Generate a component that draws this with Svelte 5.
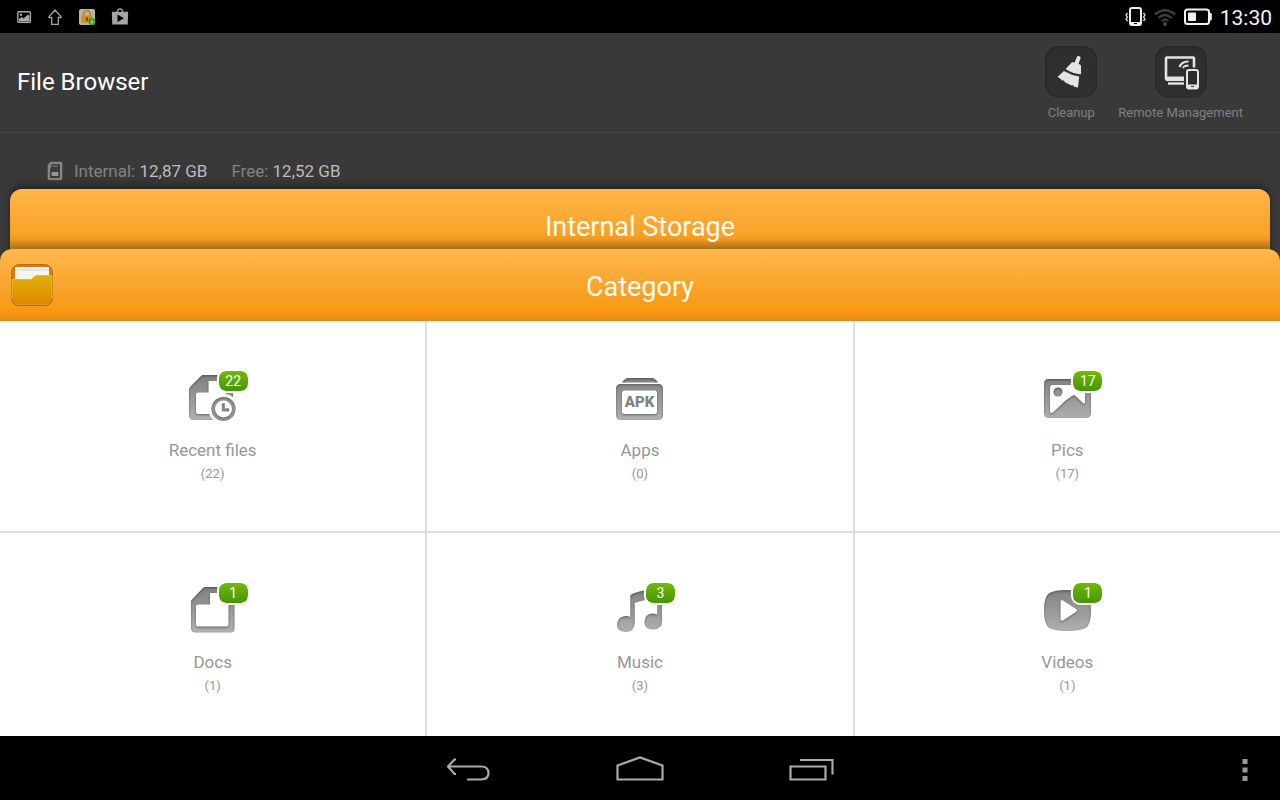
<script>
  const categories = [
    { name: 'Recent files', icon: 'recent', count: 22 },
    { name: 'Apps', icon: 'apps', count: 0 },
    { name: 'Pics', icon: 'pics', count: 17 },
    { name: 'Docs', icon: 'docs', count: 1 },
    { name: 'Music', icon: 'music', count: 3 },
    { name: 'Videos', icon: 'videos', count: 1 }
  ];
</script>

<div class="screen">
  <div class="status">
    <div class="notices">
      <svg width="16" height="16" viewBox="0 0 16 16"><rect x="1.8" y="2.8" width="12.6" height="10.6" rx="1" fill="none" stroke="#a8a8a8" stroke-width="1.4" /><path d="M3 12V10l3-2 1.500 1.500L12 5.500 13.500 7v5.500H3z" fill="#a8a8a8" /><circle cx="5" cy="5.700" r="1.200" fill="#a8a8a8" /></svg>
      <svg width="16" height="18" viewBox="0 0 16 18"><path d="M8 2L2 8.500V9.500H4.700V16.300H11.300V9.500H14V8.500z" fill="none" stroke="#a0a0a0" stroke-width="1.300" /></svg>
      <svg width="18" height="18" viewBox="0 0 18 18"><rect x="1" y="1" width="16" height="16" rx="2" fill="#b9b5a8" /><path d="M5.500 9V6a3.300 3.300 0 0 1 6.600 0v3" fill="none" stroke="#c98420" stroke-width="1.800" /><rect x="3.500" y="7.500" width="10.500" height="7.500" rx="1" fill="#d58a1c" /><path d="M8 9.500h2v3.500h-2z" fill="#7c4a10" /><circle cx="14" cy="13.500" r="3.500" fill="#2c9a20" /><path d="M14 11.300v4m-1.700-1.700L14 15.400l1.700-1.800" fill="none" stroke="#b9e0a8" /></svg>
      <svg width="18" height="20" viewBox="0 0 18 20"><path d="M6.300 5C6.300 1 11.700 1 11.700 5" fill="none" stroke="#a0a0a0" stroke-width="1.300" /><path d="M.8 4.800H17.200L16.700 17.500H1.300z" fill="#a5a5a5" /><path d="M6.500 7.500v7.500l6.500-3.800z" fill="#000" /></svg>
    </div>
    <div class="system">
      <svg width="22" height="20" viewBox="0 0 22 20"><rect x="6" y="1" width="11" height="17" rx="2" fill="none" stroke="#eee" stroke-width="2" /><path d="M6 15h11v3H6z" fill="#eee" /><path d="M10 16.500h3" stroke="#000" /><path d="M3.500 6L2 8l1.500 2L2 12l1.500 2M19.500 6L21 8l-1.500 2 1.500 2-1.500 2" fill="none" stroke="#ddd" stroke-width="1.300" /></svg>
      <svg width="22" height="20" viewBox="0 0 22 20"><g fill="none" stroke="#3c3c3c" stroke-width="2.300"><path d="M1 7.500Q11-1 21 7.500M4.300 11Q11 5 17.700 11M7.500 14Q11 11 14.500 14" /></g><circle cx="11" cy="17" r="2" fill="#484848" /></svg>
      <svg width="28" height="20" viewBox="0 0 28 20"><rect x="1" y="2.500" width="24" height="14.500" rx="2.500" fill="none" stroke="#f1f1f1" stroke-width="2" /><path d="M25 6h1.500q1.300 0 1.300 1.300v5q0 1.200-1.300 1.200H25z" fill="#f1f1f1" /><rect x="4" y="5.500" width="8" height="8.500" rx="1" fill="#f1f1f1" /></svg>
      <span class="clock">13:30</span>
    </div>
  </div>

  <header>
    <h1>File Browser</h1>
    <div class="tools">
      <button class="tool">
        <span class="plate">
          <svg width="52" height="52" viewBox="0 0 52 52" fill="#e4e4e4"><path d="M31.600 11.400Q32.500 9.600 34.400 10.300 36 11 35.500 12.700L33.500 17.500 36 19.500V28.200Q27.500 27.700 20.500 23L27 16.300 29.700 16.500z" /><path d="M18.900 25Q26.500 29.500 34.200 30.400L33 41.600 28.500 40.500 28.300 39 26.500 39.600 20 36.200 18.500 34 18 35 15 32.500 12.500 31z" /></svg>
        </span>
        <span>Cleanup</span>
      </button>
      <button class="tool">
        <span class="plate">
          <svg width="52" height="52" viewBox="0 0 52 52"><rect x="11" y="11.500" width="28" height="22" rx="1" fill="none" stroke="#e4e4e4" stroke-width="2.600" /><path d="M11 30.500H29V35H11z" fill="#e4e4e4" /><path d="M13 37.500H30" stroke="#e4e4e4" stroke-width="2.400" /><path d="M24.500 21Q26.500 15.500 33.500 15.500M28 22Q29.500 19.500 33.500 19.500" fill="none" stroke="#e4e4e4" stroke-width="2.200" /><rect x="29" y="21.500" width="16" height="24" fill="#2d2d2d" /><rect x="32" y="24" width="11" height="18.500" rx="2" fill="none" stroke="#e4e4e4" stroke-width="2" /><path d="M32 38.500h11v4H32z" fill="#e4e4e4" /><path d="M36 40.500h3" stroke="#333" /></svg>
        </span>
        <span>Remote Management</span>
      </button>
    </div>
  </header>

  <div class="capacity">
    <svg width="16" height="20" viewBox="0 0 16 20"><path d="M3.500.800H13.500Q15.300.800 15.300 2.600V17.300Q15.300 19.200 13.500 19.200H2.500Q.700 19.200.700 17.300V4z" fill="#858585" /><path d="M5 3H12Q13 3 13 4V16Q13 17 12 17H4Q3 17 3 16V8L4 7V4z" fill="#3b3b3b" /><path d="M6 4v2M8 4v2M10 4v2" stroke="#858585" /><rect x="4.500" y="11" width="7" height="4" rx="1" fill="#959595" /></svg>
    <span class="pair">Internal: <b>12,87 GB</b></span>
    <span class="pair">Free: <b>12,52 GB</b></span>
  </div>

  <button class="panel storage">Internal Storage</button>
  <div class="panel category">
    <svg class="folder" width="44" height="44" viewBox="0 0 44 44">
      <defs>
        <linearGradient id="fold" x2="0" y2="1"><stop stop-color="#e0b00a" /><stop offset="1" stop-color="#df8802" /></linearGradient>
      </defs>
      <rect x="1.500" y="1.500" width="41" height="41" rx="8" fill="#d97914" stroke="#bd6d0b" />
      <path d="M5 5Q5 4 6 4H38Q39 4 39 5V18H5z" fill="#f4f4f0" />
      <path d="M5 7H39" stroke="#d7d7d0" />
      <path d="M2 16.500H20Q22 16.500 23.500 14.500T27 12.500H42V35Q42 42 35 42H9Q2 42 2 35z" fill="url(#fold)" stroke="#e9b42c" />
      <path d="M2 36Q3 42.500 9 42.500H35Q41 42.500 42 36" fill="none" stroke="#ad6500" />
    </svg>
    <h2>Category</h2>
  </div>

  <main>
    {#each categories as c}
      <button class="tile">
        <span class="art">
          <svg width="72" height="56" viewBox="0 0 72 56">
            <defs>
              <linearGradient id="grey-{c.icon}" gradientUnits="userSpaceOnUse" x1="0" y1="7" x2="0" y2="52"><stop stop-color="#7f7f7f" /><stop offset=".5" stop-color="#989898" /><stop offset="1" stop-color="#b0b0b0" /></linearGradient>
              <filter id="inset-{c.icon}" filterUnits="userSpaceOnUse" x="0" y="0" width="72" height="56" color-interpolation-filters="sRGB">
                <feFlood flood-color="#000" flood-opacity=".4" />
                <feComposite in2="SourceAlpha" operator="out" />
                <feGaussianBlur stdDeviation="1.2" />
                <feOffset dy="1" />
                <feComposite in2="SourceAlpha" operator="in" result="shade" />
                <feMerge><feMergeNode in="SourceGraphic" /><feMergeNode in="shade" /></feMerge>
              </filter>
            </defs>
            <g fill="url(#grey-{c.icon})" fill-rule="evenodd" filter="url(#inset-{c.icon})">
              {#if c.icon === 'recent'}
                <path d="M26 7H52Q56 7 56 11V48Q56 52 52 52H17Q12 52 12 47V22Q12 20 13.500 18.500L23 9Q24.500 7 26 7zM31.500 13V24.500H21Q19 24.500 19 26.500V44Q19 46 21 46H49V13z" />
              {:else if c.icon === 'docs'}
                <path d="M28 7H53Q57.500 7 57.500 11.500V48Q57.500 52.500 53 52.500H18.500Q14 52.500 14 48V22Q14 20.500 15.500 19L25 9Q26.500 7 28 7zM33 13V24.500H21Q19 24.500 19 26.500V44.500Q19 46.500 21 46.500H49.500Q51.500 46.500 51.500 44.500V13z" />
              {:else if c.icon === 'apps'}
                <path d="M18 14.500Q21 10 24 10H48Q51 10 54 14.500z" />
                <path d="M17 16H54Q59 16 59 21V47Q59 52 54 52H17Q12 52 12 47V21Q12 16 17 16zM20.500 22.500Q18 22.500 18 25V43.500Q18 46 20.500 46H50.500Q53 46 53 43.500V25Q53 22.500 50.500 22.500z" />
              {:else if c.icon === 'pics'}
                <path d="M18 11H55Q60 11 60 16V45Q60 50 55 50H18Q13 50 13 45V16Q13 11 18 11zM21.500 17Q19 17 19 19.500V43Q19 45 20.500 45 21.500 45 23 43.500L31 36Q32.500 34.500 34 33L41 28Q43 26.500 44.500 28L52 35Q54 36.500 54 34V17z" />
                <circle cx="27" cy="24" r="4.500" />
              {:else if c.icon === 'music'}
                <path d="M26.300 16.500Q26.300 14.500 28.500 13.700 42 9 58 8V41Q58 49.500 49 49.500 40.500 49.500 40.500 42 40.500 34 48.500 33.500 51 33.500 53.300 34.500V19Q41 19 30.700 23V43.500Q30 52 21.500 52 13 51.500 13 44.500 13.500 37 21 36 24.500 35.500 26.300 37z" />
              {:else}
                <path d="M36.500 10Q49 10 54.500 13 60 16 60 30.500T54.500 48Q49 51 36.500 51T18.500 48Q13 45 13 30.500T18.500 13Q24 10 36.500 10zM31 20Q29.500 20 29.500 22V39Q29.500 41.500 32 40.500L45 32Q47 30.500 45 29L32 20.500z" />
              {/if}
            </g>
            {#if c.icon === 'recent'}
              <circle cx="46.500" cy="41" r="15" fill="#fff" />
              <g filter="url(#inset-recent)" fill="none">
                <circle cx="46.500" cy="41" r="10.300" stroke="#999" stroke-width="3.600" />
                <path d="M46.300 35.500V42H52" stroke="#969696" stroke-width="2.800" />
              </g>
            {:else if c.icon === 'apps'}
              <text x="35.500" y="39" text-anchor="middle" class="apk">APK</text>
            {/if}
          </svg>
          {#if c.count > 0}<span class="badge">{c.count}</span>{/if}
        </span>
        <span class="name">{c.name}</span>
        <span class="count">({c.count})</span>
      </button>
    {/each}
  </main>

  <nav>
    <div class="keys">
      <button aria-label="Back"><svg width="44" height="32" viewBox="2 0 44 32" fill="none" stroke="#aaa" stroke-width="2.200"><path d="M11 4.500H9.500L3 11.500 9.500 19H11M3.500 11.500H36Q43.500 11.500 43.500 18T36 24.500H22" /></svg></button>
      <button aria-label="Home"><svg width="48" height="32" viewBox="0 0 48 32" fill="none" stroke="#aaa" stroke-width="2.200"><path d="M1.500 24.500V10.500L24 2.500 46.500 10.500V24.500z" /></svg></button>
      <button aria-label="Recent apps"><svg width="48" height="32" viewBox="0 0 48 32" fill="none" stroke="#aaa" stroke-width="2.200"><path d="M3.500 11.500H38.500V24.500H3.500zM13 5H45.500V19.500" /></svg></button>
    </div>
    <button class="more" aria-label="More options"><svg width="6" height="24" viewBox="0 0 6 24" fill="#999"><path d="M.5 1h5v5h-5zM.5 9.500h5v5h-5zM.5 18h5v5h-5z" /></svg></button>
  </nav>
</div>

<style>
  :global(body) {
    margin: 0;
    background: #000;
  }
  .screen {
    display: flex;
    flex-direction: column;
    height: 100vh;
    overflow: hidden;
    font-family: Roboto, "Noto Sans", sans-serif;
    background: #393939;
  }
  svg {
    display: block;
    flex: none;
  }
  button {
    margin: 0;
    padding: 0;
    border: 0;
    background: none;
    font: inherit;
    color: inherit;
  }
  .status {
    display: flex;
    flex: none;
    justify-content: space-between;
    align-items: center;
    height: 33px;
    padding: 0 8px 0 16px;
    background: #000;
  }
  .notices {
    display: flex;
    align-items: center;
    gap: 15px;
  }
  .system {
    display: flex;
    align-items: center;
    gap: 8px;
    color: #f4f4f4;
  }
  .clock {
    font-size: 21px;
    line-height: 28px;
    padding-top: 2px;
  }
  header {
    box-sizing: border-box;
    display: flex;
    flex: none;
    justify-content: space-between;
    height: 100px;
    padding: 13px 37px 0 17px;
    border-bottom: 1px solid #444;
  }
  h1 {
    margin: 0;
    font-size: 24px;
    line-height: 72px;
    font-weight: 400;
    color: #fff;
  }
  .tools {
    display: flex;
    gap: 21px;
  }
  .tool {
    display: flex;
    flex-direction: column;
    align-items: center;
    gap: 7px;
    font-size: 13px;
    line-height: 16px;
    color: #808080;
  }
  .plate {
    border-radius: 14px;
    background: #2f2f2f;
    box-shadow: inset 0 1px 3px #222, 0 1px 0 #404040;
  }
  .capacity {
    display: flex;
    flex: none;
    align-items: center;
    height: 36px;
    padding: 20px 47px 0;
    font-size: 17px;
    line-height: 20px;
    color: #828282;
  }
  .capacity svg {
    margin-right: 11px;
  }
  .pair {
    margin-right: 24px;
  }
  .pair b {
    font-weight: 400;
    color: #bcbcbc;
  }
  .panel {
    flex: none;
    border-radius: 12px 12px 0 0;
    text-align: center;
    color: #fffbf0;
    font-size: 27px;
  }
  .storage {
    height: 72px;
    margin: 0 10px -12px;
    padding-top: 4px;
    line-height: 68px;
    background: linear-gradient(#fdb74b, #faa227 44px, #f39a20 50px, #a86d15 60px);
    box-shadow: 0 -4px 8px -2px #1c1c1c;
  }
  .category {
    position: relative;
    display: grid;
    grid-template-columns: 1fr auto 1fr;
    align-items: center;
    height: 72px;
    background: linear-gradient(#fdb84e, #f79713 64px, #e38a12);
  }
  .folder {
    margin-left: 10px;
  }
  h2 {
    margin: 0;
    padding-top: 4px;
    font-size: 27px;
    font-weight: 400;
  }
  main {
    display: grid;
    flex: 1;
    grid-template-columns: repeat(3, 1fr);
    grid-auto-rows: 210px;
    gap: 2px;
    min-height: 0;
    overflow: hidden;
    background: #dedede;
  }
  .tile {
    display: flex;
    flex-direction: column;
    align-items: center;
    padding-top: 47px;
    background: #fff;
    color: #969696;
  }
  .art {
    position: relative;
  }
  .badge {
    position: absolute;
    top: 1px;
    right: -1px;
    width: 29px;
    border: 2px solid #fff;
    border-radius: 9px;
    background: linear-gradient(#73b80b, #469500) padding-box;
    color: #fff;
    font-size: 14px;
    line-height: 20px;
  }
  .name {
    margin-top: 14px;
    font-size: 17px;
    line-height: 24px;
  }
  .count {
    font-size: 13px;
    line-height: 24px;
  }
  .apk {
    font: 900 15px Roboto, sans-serif;
    fill: #828282;
  }
  nav {
    position: relative;
    display: flex;
    flex: none;
    justify-content: center;
    height: 64px;
    background: #000;
  }
  .keys {
    display: flex;
    padding-top: 5px;
  }
  .keys button {
    display: flex;
    justify-content: center;
    align-items: center;
    width: 171px;
  }
  .more {
    position: absolute;
    top: 0;
    right: 0;
    display: flex;
    align-items: center;
    height: 67px;
    padding: 0 32px;
  }
</style>
